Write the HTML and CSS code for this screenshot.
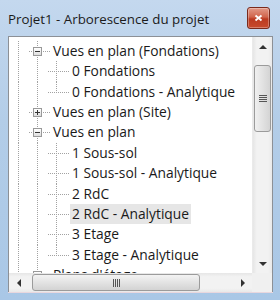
FILE: index.html
```html
<!DOCTYPE html>
<html lang="fr">

<head>
    <meta charset="UTF-8">
    <meta name="viewport" content="width=device-width, initial-scale=1.0">
    <title>Arborescence du projet</title>
    <link rel="stylesheet" href="styles.css">
</head>

<body>
    <div class="window">
        <div class="titlebar">
            <span class="title">Projet1 - Arborescence du projet</span>
            <button class="btn-close" type="button" aria-label="Fermer">
                <svg width="9" height="8" viewBox="0 0 9 8">
                    <path d="M1.5 1.5 L7.5 6.5 M7.5 1.5 L1.5 6.5" stroke="#fff" stroke-width="1.8" />
                </svg>
            </button>
        </div>

        <div class="frame">
            <div class="view">
                <ul class="tree">
                    <li class="row">
                        <span class="ind v"></span>
                        <span class="ind node mid"><i class="exp"></i></span>
                        <span class="label">Vues en plan (Fondations)</span>
                    </li>
                    <li class="row">
                        <span class="ind v"></span>
                        <span class="ind v"></span>
                        <span class="ind leaf mid"></span>
                        <span class="label">0 Fondations</span>
                    </li>
                    <li class="row">
                        <span class="ind v"></span>
                        <span class="ind v"></span>
                        <span class="ind leaf end"></span>
                        <span class="label">0 Fondations - Analytique</span>
                    </li>
                    <li class="row">
                        <span class="ind v"></span>
                        <span class="ind node mid"><i class="exp plus"></i></span>
                        <span class="label">Vues en plan (Site)</span>
                    </li>
                    <li class="row">
                        <span class="ind v"></span>
                        <span class="ind node mid"><i class="exp"></i></span>
                        <span class="label">Vues en plan</span>
                    </li>
                    <li class="row">
                        <span class="ind v"></span>
                        <span class="ind v"></span>
                        <span class="ind leaf mid"></span>
                        <span class="label">1 Sous-sol</span>
                    </li>
                    <li class="row">
                        <span class="ind v"></span>
                        <span class="ind v"></span>
                        <span class="ind leaf mid"></span>
                        <span class="label">1 Sous-sol - Analytique</span>
                    </li>
                    <li class="row">
                        <span class="ind v"></span>
                        <span class="ind v"></span>
                        <span class="ind leaf mid"></span>
                        <span class="label">2 RdC</span>
                    </li>
                    <li class="row">
                        <span class="ind v"></span>
                        <span class="ind v"></span>
                        <span class="ind leaf mid"></span>
                        <span class="label selected">2 RdC - Analytique</span>
                    </li>
                    <li class="row">
                        <span class="ind v"></span>
                        <span class="ind v"></span>
                        <span class="ind leaf mid"></span>
                        <span class="label">3 Etage</span>
                    </li>
                    <li class="row">
                        <span class="ind v"></span>
                        <span class="ind v"></span>
                        <span class="ind leaf end"></span>
                        <span class="label">3 Etage - Analytique</span>
                    </li>
                    <li class="row">
                        <span class="ind v"></span>
                        <span class="ind node mid"><i class="exp plus"></i></span>
                        <span class="label">Plans d'étage</span>
                    </li>
                </ul>

                <!-- barre verticale -->
                <div class="vscroll">
                    <span class="arrow up"></span>
                    <div class="track">
                        <div class="thumb"><i class="grip"></i></div>
                    </div>
                    <span class="arrow down"></span>
                </div>
            </div>

            <!-- barre horizontale -->
            <div class="hbar">
                <div class="hscroll">
                    <span class="arrow left"></span>
                    <div class="track">
                        <div class="thumb"><i class="grip"></i></div>
                    </div>
                    <span class="arrow right"></span>
                </div>
                <div class="corner"></div>
            </div>
        </div>
    </div>
</body>

</html>
```

FILE: styles.css
```css
html,
body {
    margin: 0;
    padding: 0;
}

ul,
li {
    list-style: none;
    margin: 0;
    padding: 0;
}

button {
    cursor: pointer;
    border: none;
}

/* fenetre */
.window {
    width: 280px;
    height: 300px;
    box-sizing: border-box;
    display: flex;
    flex-direction: column;
    background: linear-gradient(#c4d8ee, #b3cde8 40%, #a9c7e6);
    font-family: "Open Sans", "Noto Sans", sans-serif;
    overflow: hidden;
}

.titlebar {
    height: 36px;
    flex: none;
    display: flex;
    align-items: center;
    justify-content: space-between;
    padding: 0 10px 0 8px;
}

.title {
    font-size: 13.3px;
    color: #1b1b1b;
    margin-top: 1px;
}

.btn-close {
    width: 23px;
    height: 22px;
    padding: 0;
    border-radius: 3px;
    border: 1px solid #7a2a1c;
    background: linear-gradient(#e39a88, #d0654c 45%, #bb3a20 55%, #c84a2c);
    display: flex;
    align-items: center;
    justify-content: center;
    box-shadow: inset 0 0 0 1px rgba(255, 255, 255, 0.3);
}

/* zone de l'arborescence */
.frame {
    flex: 1;
    margin: 0 7px 8px 8px;
    border: 1px solid #8c9096;
    border-bottom: none;
    background: #fff;
    display: flex;
    flex-direction: column;
    min-height: 0;
    box-shadow: 0 1px 0 #e9d7de;
}

.view {
    flex: 1;
    display: flex;
    min-height: 0;
}

.tree {
    flex: 1;
    overflow: hidden;
    padding-top: 4px;
    font-size: 13.8px;
    color: #1a1a1a;
}

.row {
    display: flex;
    height: 20.36px;
    line-height: 20px;
    white-space: nowrap;
}

/* lignes pointillees */
.ind {
    width: 19px;
    flex: none;
    position: relative;
}

.ind.v {
    background: linear-gradient(#a2a2a2 50%, transparent 50%) 9px 0 / 1px 2px repeat-y;
}

.ind.node,
.ind.leaf {
    width: 23px;
}

.ind.mid {
    background:
        linear-gradient(#a2a2a2 50%, transparent 50%) 9px 0 / 1px 2px repeat-y,
        linear-gradient(90deg, #a2a2a2 50%, transparent 50%) 9px 10px / 2px 1px repeat-x;
}

.ind.end {
    background: linear-gradient(90deg, #a2a2a2 50%, transparent 50%) 9px 10px / 2px 1px repeat-x;
}

.ind.end::before {
    content: "";
    position: absolute;
    left: 9px;
    top: 0;
    width: 1px;
    height: 10px;
    background: linear-gradient(#a2a2a2 50%, transparent 50%) 0 0 / 1px 2px repeat-y;
}

/* bouton +/- */
.exp {
    position: absolute;
    left: 5px;
    top: 6px;
    width: 7px;
    height: 7px;
    border: 1px solid #999;
    background: linear-gradient(#fff, #dedede);
}

.exp::before {
    content: "";
    position: absolute;
    left: 1px;
    top: 3px;
    width: 5px;
    height: 1px;
    background: #333;
}

.exp.plus::after {
    content: "";
    position: absolute;
    left: 3px;
    top: 1px;
    width: 1px;
    height: 5px;
    background: #333;
}

.label {
    padding: 0 2px;
    height: 20px;
}

.label.selected {
    background: #e6e6e6;
}

/* barres de defilement */
.vscroll,
.hscroll {
    display: flex;
    background: linear-gradient(90deg, #e6e6e6, #f2f2f2 20%, #f2f2f2 80%, #e9e9e9);
}

.vscroll {
    width: 19px;
    flex-direction: column;
    border-left: 1px solid #eaeaea;
}

.hbar {
    height: 19px;
    flex: none;
    display: flex;
}

.hscroll {
    flex: 1;
    background: linear-gradient(#e6e6e6, #f2f2f2 20%, #f2f2f2 80%, #e9e9e9);
}

.corner {
    width: 20px;
    background: #f0f0f0;
}

.arrow {
    flex: none;
    width: 19px;
    height: 19px;
    display: flex;
    align-items: center;
    justify-content: center;
}

.arrow::before {
    content: "";
    border: 4px solid transparent;
}

.arrow.up::before {
    border-bottom: 4px solid #333;
    border-top-width: 0;
}

.arrow.down::before {
    border-top: 4px solid #333;
    border-bottom-width: 0;
}

.arrow.left::before {
    border-right: 4px solid #333;
    border-left-width: 0;
}

.arrow.right::before {
    border-left: 4px solid #333;
    border-right-width: 0;
}

.track {
    flex: 1;
    display: flex;
}

.vscroll .track {
    flex-direction: column;
    padding: 9px 0 0;
}

.hscroll .track {
    padding: 0 0 0 4px;
}

.thumb {
    box-sizing: border-box;
    border: 1px solid #9b9b9b;
    border-radius: 3px;
    display: flex;
    align-items: center;
    justify-content: center;
}

.vscroll .thumb {
    height: 67px;
    margin: 0 1px;
    background: linear-gradient(90deg, #f0f0f0, #e2e2e2 50%, #d4d4d4);
}

.hscroll .thumb {
    width: 168px;
    margin: 1px 0;
    background: linear-gradient(#f3f3f3, #e3e3e3 50%, #d3d3d3);
}

.grip {
    width: 8px;
    height: 7px;
    background: linear-gradient(#555 1px, transparent 1px) 0 0 / 8px 2px;
}

.hscroll .grip {
    width: 7px;
    height: 8px;
    background: linear-gradient(90deg, #555 1px, transparent 1px) 0 0 / 2px 8px;
}
```
